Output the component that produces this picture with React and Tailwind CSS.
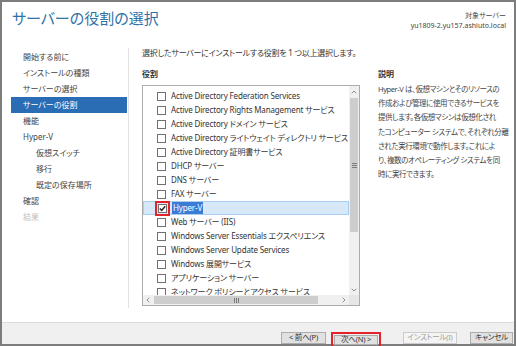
import { ChevronUp, ChevronDown, ChevronLeft, ChevronRight } from 'lucide-react'

const NAV = [
  { label: '開始する前に' },
  { label: 'インストールの種類' },
  { label: 'サーバーの選択' },
  { label: 'サーバーの役割', active: true },
  { label: '機能' },
  { label: 'Hyper-V' },
  { label: '仮想スイッチ', sub: true },
  { label: '移行', sub: true },
  { label: '既定の保存場所', sub: true },
  { label: '確認' },
  { label: '結果', disabled: true },
]

const ROLES = [
  'Active Directory Federation Services',
  'Active Directory Rights Management サービス',
  'Active Directory ドメイン サービス',
  'Active Directory ライトウェイト ディレクトリ サービス',
  'Active Directory 証明書サービス',
  'DHCP サーバー',
  'DNS サーバー',
  'FAX サーバー',
  'Hyper-V',
  'Web サーバー (IIS)',
  'Windows Server Essentials エクスペリエンス',
  'Windows Server Update Services',
  'Windows 展開サービス',
  'アプリケーション サーバー',
  'ネットワーク ポリシーとアクセス サービス',
]

const DESC = [
  'Hyper-V は、仮想マシンとそのリソースの',
  '作成および管理に使用できるサービスを',
  '提供します。各仮想マシンは仮想化され',
  'たコンピューター システムで、それぞれ分離',
  'された実行環境で動作します。これによ',
  'り、複数のオペレーティング システムを同',
  '時に実行できます。',
]

function Checkbox({ checked }) {
  return (
    <span
      className={
        'flex h-[9px] w-[9px] shrink-0 items-center justify-center border border-[#707070] bg-white' +
        (checked ? ' outline-2 outline-offset-[1px] outline-[#e3232b]' : '')
      }
    >
      {checked && (
        <svg width="7" height="7" viewBox="0 0 7 7">
          <path d="M0.8 3.6 L2.7 5.5 L6.2 1.2" fill="none" stroke="#222" strokeWidth="1.4" />
        </svg>
      )}
    </span>
  )
}

function Grip({ vertical }) {
  return vertical ? (
    <span className="flex flex-col gap-px">
      <span className="h-px w-[5px] bg-[#7a7a7a]" />
      <span className="h-px w-[5px] bg-[#7a7a7a]" />
      <span className="h-px w-[5px] bg-[#7a7a7a]" />
    </span>
  ) : (
    <span className="flex gap-px">
      <span className="h-[5px] w-px bg-[#7a7a7a]" />
      <span className="h-[5px] w-px bg-[#7a7a7a]" />
      <span className="h-[5px] w-px bg-[#7a7a7a]" />
    </span>
  )
}

export default function App() {
  return (
    <div className="flex h-[346px] w-[516px] flex-col border-2 border-[#7d7d7d] bg-white font-['Noto_Sans','Noto_Sans_CJK_JP',sans-serif] text-[#333] [font-feature-settings:'palt']">
      {/* header */}
      <div className="flex h-[44px] shrink-0 justify-between pl-[10px] pr-[8px]">
        <div className="pt-[6px] text-[15px] leading-[20px] text-[#2f72a8]">サーバーの役割の選択</div>
        <div className="flex flex-col items-end pt-[9px] text-[7px] leading-[10px] text-[#444]">
          <span>対象サーバー</span>
          <span>yu1809-2.yu157.ashiuto.local</span>
        </div>
      </div>

      {/* body */}
      <div className="flex min-h-0 flex-1">
        <div className="w-[126px] shrink-0 pl-[9px] pr-[1px] pt-[3px]">
          {NAV.map(n => (
            <div
              key={n.label}
              className={
                'flex h-[16px] items-center text-[8px] ' +
                (n.active ? 'bg-[#2a6db5] text-white ' : n.disabled ? 'text-[#c0c0c0] ' : 'text-[#444] ') +
                (n.sub ? 'pl-[25px]' : 'pl-[12px]')
              }
            >
              {n.label}
            </div>
          ))}
        </div>
        <div className="mb-[14px] mt-[2px] w-px bg-[#e2e2e2]" />

        <div className="flex flex-1 flex-col pl-[13px]">
          <div className="h-[13px] whitespace-nowrap text-[8px] leading-[13px] tracking-[-0.25px]">選択したサーバーにインストールする役割を 1 つ以上選択します。</div>
          <div className="mt-[8px] flex">
            <div className="flex w-[218px] flex-col">
              <div className="h-[14px] text-[8px] font-semibold leading-[14px]">役割</div>
              <div className="mt-[4px] flex h-[221px] flex-col border border-[#acacac]">
                <div className="flex min-h-0 flex-1">
                  <div className="flex-1 overflow-hidden pt-[3px]">
                    {ROLES.map(r => {
                      const sel = r === 'Hyper-V'
                      return (
                        <div
                          key={r}
                          className={
                            'flex h-[14px] items-center gap-[5px] whitespace-nowrap pl-[14px] text-[8px] tracking-[-0.15px] ' +
                            (sel ? 'border border-[#a9cdf0] bg-[#d7e8f9] pl-[13px]' : '')
                          }
                        >
                          <Checkbox checked={sel} />
                          <span className={sel ? 'bg-[#3a7bd5] px-px text-white' : ''}>{r}</span>
                        </div>
                      )
                    })}
                  </div>
                  <div className="flex w-[10px] flex-col bg-[#f0f0f0]">
                    <div className="flex h-[11px] items-center justify-center text-[#606060]">
                      <ChevronUp size={8} strokeWidth={2} />
                    </div>
                    <div className="mx-px mt-px flex h-[134px] items-center justify-center bg-[#cdcdcd]">
                      <Grip vertical />
                    </div>
                    <div className="flex-1" />
                    <div className="flex h-[11px] items-center justify-center text-[#606060]">
                      <ChevronDown size={8} strokeWidth={2} />
                    </div>
                  </div>
                </div>
                <div className="flex h-[10px] shrink-0 bg-[#f0f0f0]">
                  <div className="flex w-[10px] items-center justify-center text-[#606060]">
                    <ChevronLeft size={8} strokeWidth={2} />
                  </div>
                  <div className="my-px ml-px flex w-[164px] items-center justify-center bg-[#cdcdcd]">
                    <Grip />
                  </div>
                  <div className="flex-1" />
                  <div className="flex w-[11px] items-center justify-center text-[#606060]">
                    <ChevronRight size={8} strokeWidth={2} />
                  </div>
                  <div className="w-[10px] bg-[#e6e6e6]" />
                </div>
              </div>
            </div>

            <div className="ml-[18px] flex flex-col">
              <div className="h-[14px] text-[8px] font-semibold leading-[14px]">説明</div>
              <div className="mt-[1px] text-[7.5px] leading-[14.2px] tracking-[-0.4px] text-[#444]">
                {DESC.map(l => (
                  <div key={l} className="whitespace-nowrap">{l}</div>
                ))}
              </div>
            </div>
          </div>
        </div>
      </div>

      {/* footer */}
      <div className="flex h-[22px] shrink-0 items-start border-t border-[#dcdcdc] bg-[#f0f0f0] pr-px pt-[9px] text-[7.5px] tracking-[-0.2px]">
        <div className="ml-[279px] flex h-[12px] w-[45px] items-center justify-center border border-[#adadad] bg-[#e1e1e1] text-[#333]">&lt; 前へ(P)</div>
        <div className="ml-[5px] border-2 border-[#e3232b] p-px">
          <div className="flex h-[10px] w-[44px] items-center justify-center border border-[#adadad] bg-[#e1e1e1] text-[#333]">次へ(N) &gt;</div>
        </div>
        <div className="ml-[22px] flex h-[12px] w-[54px] items-center justify-center border border-[#cccccc] bg-[#f4f4f4] text-[#a0a0a0]">インストール(I)</div>
        <div className="ml-auto flex h-[12px] w-[43px] items-center justify-center border border-[#adadad] bg-[#e1e1e1] text-[#333]">キャンセル</div>
      </div>
    </div>
  )
}
